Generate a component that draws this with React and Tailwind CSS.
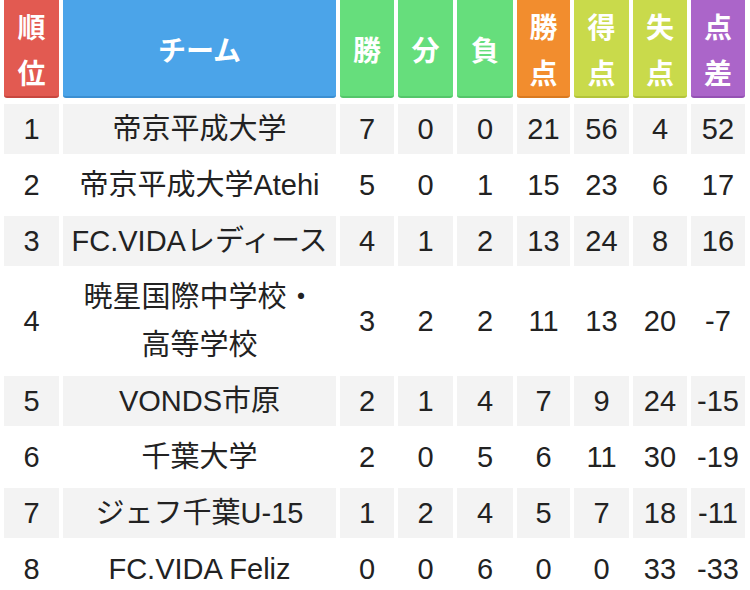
import React from 'react';

const headers = [
  { label: ['順', '位'], cls: 'bg-[#e25a51] border-[#c8473f]' },
  { label: ['チーム'], cls: 'bg-[#4ba4e9] border-[#3b8fd2]' },
  { label: ['勝'], cls: 'bg-[#66de7c] border-[#54c66a]' },
  { label: ['分'], cls: 'bg-[#66de7c] border-[#54c66a]' },
  { label: ['負'], cls: 'bg-[#66de7c] border-[#54c66a]' },
  { label: ['勝', '点'], cls: 'bg-[#f28d2e] border-[#d97a20]' },
  { label: ['得', '点'], cls: 'bg-[#c9da4b] border-[#b3c43b]' },
  { label: ['失', '点'], cls: 'bg-[#c9da4b] border-[#b3c43b]' },
  { label: ['点', '差'], cls: 'bg-[#ab65c9] border-[#9551b4]' },
];

const rows = [
  [1, '帝京平成大学', 7, 0, 0, 21, 56, 4, 52],
  [2, '帝京平成大学Atehi', 5, 0, 1, 15, 23, 6, 17],
  [3, 'FC.VIDAレディース', 4, 1, 2, 13, 24, 8, 16],
  [4, '暁星国際中学校・高等学校', 3, 2, 2, 11, 13, 20, -7],
  [5, 'VONDS市原', 2, 1, 4, 7, 9, 24, -15],
  [6, '千葉大学', 2, 0, 5, 6, 11, 30, -19],
  [7, 'ジェフ千葉U-15', 1, 2, 4, 5, 7, 18, -11],
  [8, 'FC.VIDA Feliz', 0, 0, 6, 0, 0, 33, -33],
];

function App() {
  return (
    <div
      className="w-[750px] h-[590px] overflow-hidden bg-white text-[#222]"
      style={{ fontFamily: '"Liberation Sans", "Noto Sans CJK JP", sans-serif' }}
    >
      <div className="grid grid-cols-[55px_273px_54px_55px_56px_53px_55px_54px_54px] gap-x-[4px] gap-y-[6px] px-[4px]">
        {headers.map((h, i) => (
          <div
            key={i}
            className={`flex flex-col items-center justify-center h-[98px] pt-[8px] border-b-2 rounded-b-[3px] text-white font-bold text-[28px] leading-[46px] ${h.cls}`}
          >
            {h.label.map((l) => (
              <span key={l}>{l}</span>
            ))}
          </div>
        ))}
        {rows.map((r, ri) =>
          r.map((v, ci) => (
            <div
              key={`${ri}-${ci}`}
              className={`flex items-center justify-center text-center text-[29px] leading-[48px] ${
                ri === 3 ? 'h-[98px]' : 'h-[50px]'
              } ${ri % 2 === 0 ? 'bg-[#f3f3f3]' : 'bg-white'} ${ci === 1 && ri === 3 ? 'px-[8px]' : ''}`}
            >
              {ci === 1 && ri === 3 ? (
                <span>
                  暁星国際中学校・
                  <br />
                  高等学校
                </span>
              ) : (
                v
              )}
            </div>
          ))
        )}
      </div>
    </div>
  );
}

export default App;
